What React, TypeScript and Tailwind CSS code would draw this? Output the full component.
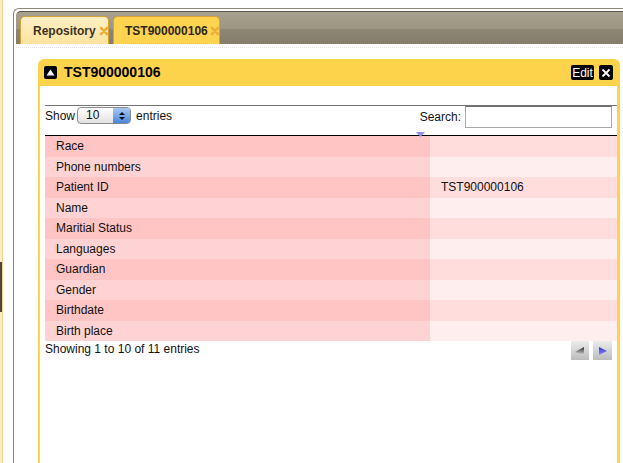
import React from 'react';

const rows: [string, string][] = [
  ['Race', ''],
  ['Phone numbers', ''],
  ['Patient ID', 'TST900000106'],
  ['Name', ''],
  ['Maritial Status', ''],
  ['Languages', ''],
  ['Guardian', ''],
  ['Gender', ''],
  ['Birthdate', ''],
  ['Birth place', ''],
];

function TabClose() {
  return (
    <svg width="10" height="10" viewBox="0 0 10 10" className="shrink-0">
      <path d="M2 2 L8 8 M8 2 L2 8" stroke="#eeae3a" strokeWidth="2.6" strokeLinecap="round" />
    </svg>
  );
}

export default function App() {
  return (
    <div className="flex h-[463px] w-[623px] overflow-hidden bg-white font-['Liberation_Sans',Arial,sans-serif] text-[12px] text-[#111]">
      {/* side splitter */}
      <div className="flex w-[3px] shrink-0 flex-col border-r border-[#f3d48e] bg-[#fdeec6]">
        <div className="h-[262px] shrink-0" />
        <div className="h-[50px] shrink-0 bg-[#4b4740]" />
      </div>
      <div className="w-[10px] shrink-0" />

      <div className="mt-[8px] flex w-[640px] shrink-0 flex-col rounded-tl-[6px] border-l border-t border-[#8d8574] pl-[2px] pt-[2px]">
        {/* tab strip */}
        <div className="flex h-[33px] shrink-0 items-end gap-[4px] rounded-tl-[5px] border-t border-[#5f5849] bg-[linear-gradient(to_bottom,#a7a08e_0%,#9d9683_52%,#8e8674_55%,#857d6b_100%)] pl-[4px]">
          <div className="flex h-[28px] w-[89px] items-center gap-[3px] rounded-t-[5px] border border-b-0 border-[#d9a233] bg-[linear-gradient(to_bottom,#fff0c4,#fde3a0)] pl-[12px] text-[12px] font-bold text-[#3b3222]">
            <span>Repository</span>
            <TabClose />
          </div>
          <div className="flex h-[28px] w-[107px] items-center gap-[2px] rounded-t-[5px] border border-b-0 border-[#d9a233] bg-[#fdd34f] pl-[11px] text-[12px] font-bold text-[#2e2616]">
            <span>TST900000106</span>
            <TabClose />
          </div>
        </div>
        <div className="h-[15px] shrink-0 pt-[3px]">
          <div className="border-t border-dotted border-[#e4e4e4]" />
        </div>

        {/* panel */}
        <div className="ml-[22px] flex w-[582px] flex-1 flex-col">
          <div className="flex h-[27px] shrink-0 items-center rounded-t-[6px] bg-[#fdd34c] pl-[6px] pr-[7px]">
            <div className="flex h-[13px] w-[13px] items-center justify-center rounded-[2px] bg-black">
              <svg width="9" height="7" viewBox="0 0 9 7">
                <polygon points="4.5,0.5 8.5,6.5 0.5,6.5" fill="#fff" />
              </svg>
            </div>
            <span className="ml-[7px] text-[14px] font-bold text-black">TST900000106</span>
            <div className="ml-auto flex items-center gap-[5px]">
              <span className="flex h-[15px] w-[23px] items-center justify-center rounded-[2px] bg-black text-[12px] text-white">Edit</span>
              <span className="flex h-[15px] w-[14px] items-center justify-center rounded-[2px] bg-black">
                <svg width="10" height="10" viewBox="0 0 10 10">
                  <path d="M1.5 1.5 L8.5 8.5 M8.5 1.5 L1.5 8.5" stroke="#fff" strokeWidth="1.8" />
                </svg>
              </span>
            </div>
          </div>

          <div className="flex flex-1 flex-col border-l-2 border-r-[3px] border-[#fdd34c] bg-white pl-[5px] pt-[19px]">
            {/* toolbar */}
            <div className="flex h-[30px] shrink-0 justify-between border-t border-[#737373] pr-[5px]">
              <div className="flex h-[19px] items-center">
                <span>Show</span>
                <div className="ml-[2px] flex h-[17px] w-[54px] items-stretch overflow-hidden rounded-[4px] border border-[#8b8b8b] bg-[linear-gradient(to_bottom,#ffffff,#e2e2e2)]">
                  <span className="flex-1 pl-[8px] leading-[15px]">10</span>
                  <span className="flex w-[17px] flex-col items-center justify-center gap-[2px] bg-[linear-gradient(to_bottom,#a9c8f3,#4a86dc)]">
                    <svg width="6" height="3" viewBox="0 0 6 3"><polygon points="3,0 6,3 0,3" fill="#111" /></svg>
                    <svg width="6" height="3" viewBox="0 0 6 3"><polygon points="0,0 6,0 3,3" fill="#111" /></svg>
                  </span>
                </div>
                <span className="ml-[5px]">entries</span>
              </div>
              <div className="flex h-[22px] items-center">
                <span className="mr-[4px]">Search:</span>
                <div className="h-[22px] w-[147px] border border-[#a9a9a9] border-t-[#6f6f6f] bg-white" />
              </div>
            </div>

            {/* table */}
            <div className="relative border-t border-black">
              <svg width="9" height="5" viewBox="0 0 9 5" className="absolute left-[371px] top-[-4px]">
                <polygon points="0,0 9,0 4.5,5" fill="#8d8ff0" />
              </svg>
              {rows.map(([label, value], i) => (
                <div key={label} className="flex h-[20.5px] items-center">
                  <div className={`flex h-full w-[385px] items-center pl-[11px] ${i % 2 === 0 ? 'bg-[#ffc4c4]' : 'bg-[#ffd3d3]'}`}>
                    {label}
                  </div>
                  <div className={`flex h-full flex-1 items-center pl-[11px] ${i % 2 === 0 ? 'bg-[#ffdddd]' : 'bg-[#ffeeee]'}`}>
                    {value}
                  </div>
                </div>
              ))}
            </div>

            {/* footer */}
            <div className="flex justify-between pr-[5px]">
              <span className="leading-[16px]">Showing 1 to 10 of 11 entries</span>
              <div className="flex gap-[4px]">
                <div className="flex h-[19px] w-[18px] items-center justify-center bg-[linear-gradient(to_bottom,#ececec,#bcbcbc)]">
                  <svg width="12" height="10" viewBox="0 0 12 10">
                    <defs>
                      <linearGradient id="pv" x1="0" y1="0" x2="0" y2="1">
                        <stop offset="0" stopColor="#2a2a2a" />
                        <stop offset="1" stopColor="#d8d8d8" />
                      </linearGradient>
                    </defs>
                    <polygon points="1,6 10,1 10,9" fill="url(#pv)" />
                  </svg>
                </div>
                <div className="flex h-[19px] w-[19px] items-center justify-center bg-[linear-gradient(to_bottom,#ececec,#bcbcbc)]">
                  <svg width="10" height="10" viewBox="0 0 10 10">
                    <defs>
                      <linearGradient id="nx" x1="0" y1="0" x2="0" y2="1">
                        <stop offset="0" stopColor="#3030c8" />
                        <stop offset="1" stopColor="#8c8cff" />
                      </linearGradient>
                    </defs>
                    <polygon points="1,1 9,5 1,9" fill="url(#nx)" />
                  </svg>
                </div>
              </div>
            </div>
          </div>
        </div>
      </div>
    </div>
  );
}
